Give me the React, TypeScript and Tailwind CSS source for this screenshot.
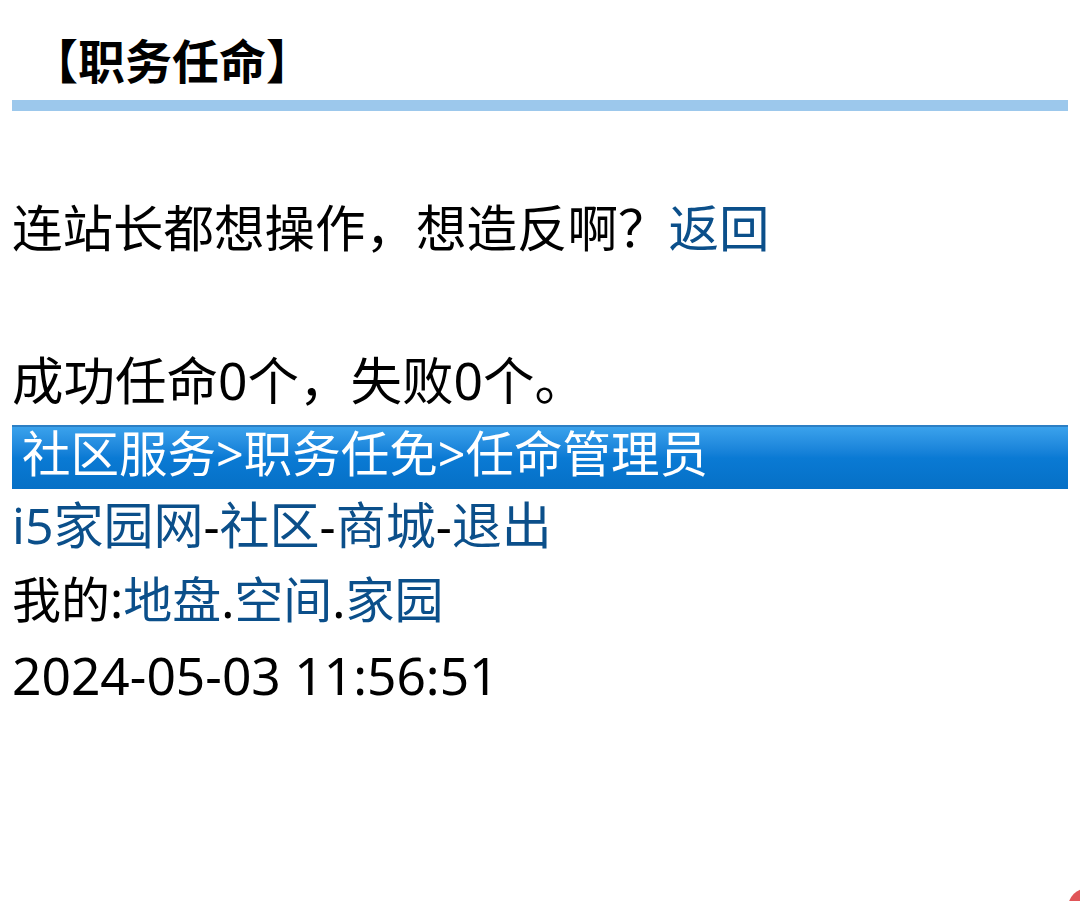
import React from 'react'

const font = { fontFamily: '"Noto Sans", "Noto Sans CJK SC", sans-serif' }

function Link({ children }: { children: React.ReactNode }) {
  return <a className="text-[#0b4f8a] no-underline">{children}</a>
}

export default function App() {
  return (
    <div className="relative h-[901px] overflow-hidden bg-white px-[12px] text-[51px] leading-[75px] text-black" style={font}>
      {/* title */}
      <div className="h-[100px] pt-[33px] pl-[19px] text-[47px] font-bold leading-[56px]">【职务任命】</div>
      <div className="h-[11px] bg-[#9cc8ec]" />

      <div className="pt-[79px]">
        <div className="text-[50.5px]">
          连站长都想操作，想造反啊？<Link>返回</Link>
        </div>
        <div className="mt-[78px] text-[51.5px]">成功任命0个，失败0个。</div>
      </div>

      <div className="mt-[7px] h-[64px] border-t-2 border-[#2c7fc4] bg-gradient-to-b from-[#3aa2ec] via-[#0a7ad4] to-[#0670c6] pl-[10px] text-[48.5px] leading-[53px] text-white">
        社区服务&gt;职务任免&gt;任命管理员
      </div>

      <div className="text-[50px] leading-[72px]">
        <Link>i5家园网</Link>-<Link>社区</Link>-<Link>商城</Link>-<Link>退出</Link>
      </div>
      <div className="text-[49px] leading-[76px]">
        我的:<Link>地盘</Link>.<Link>空间</Link>.<Link>家园</Link>
      </div>
      <div className="text-[51.5px] leading-[77px]">2024-05-03 11:56:51</div>

      {/* floating button peeking in the corner */}
      <div className="absolute left-[1068px] top-[888px] h-[40px] w-[40px] rounded-full bg-[#e05558]" />
    </div>
  )
}
